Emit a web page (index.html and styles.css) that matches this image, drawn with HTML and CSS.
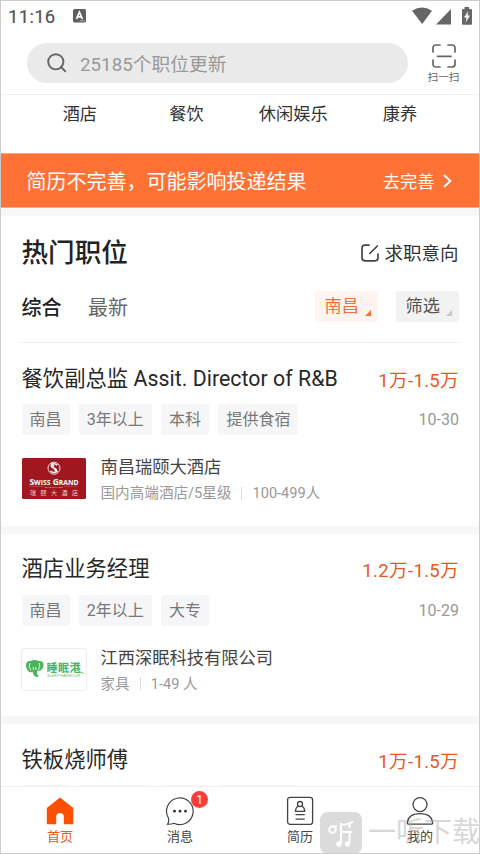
FILE: index.html
```html
<!DOCTYPE html>
<html lang="zh-CN">
<head>
<meta charset="utf-8">
<title>热门职位</title>
<link rel="stylesheet" href="styles.css">
</head>
<body>
<div class="phone">
  <header class="status">
    <span class="clock">11:16</span>
    <svg class="status-a" width="13" height="14" viewBox="0 0 13 14"><rect width="13" height="13.5" rx="1.5" fill="#606060"/><path d="M3.5 10 6.4 3.2 9.4 10M4.6 7.8h3.6" fill="none" stroke="#fff" stroke-width="1.7"/><path d="M7 11.7h4.5" stroke="#ccc" stroke-width=".8"/></svg>
    <svg class="status-icons" width="60" height="18" viewBox="0 0 60 18"><g fill="#666"><path d="M0 3.7Q10-2.7 20 3.7L10.2 17Z"/><path d="M39 2v15.500H24Z"/><path d="M52.500 0h4.500v2H59q1 0 1 1v13.700q0 1-1 1h-8q-1 0-1-1V3q0-1 1-1h1.500z"/></g><path d="M56.300 4 52 10.500h2.600L53.600 15.500 58 8.500h-2.500z" fill="#fff"/></svg>
  </header>

  <div class="search-row">
    <div class="search">
      <svg width="20" height="20" viewBox="0 0 20 20" fill="none" stroke="#666" stroke-width="1.900"><circle cx="8.800" cy="8.800" r="7.600"/><path d="m14 14 4.300 4.300" stroke-linecap="round"/></svg>
      <span>25185个职位更新</span>
    </div>
    <div class="scan">
      <svg width="24" height="24" viewBox="0 0 24 24" fill="none" stroke="#666" stroke-width="1.700" stroke-linecap="round"><path d="M1 8V4q0-3 3-3h4M16 1h4q3 0 3 3v4M23 16v4q0 3-3 3h-4M8 23H4q-3 0-3-3v-4M5.500 12.300h13.500"/></svg>
      <span>扫一扫</span>
    </div>
  </div>

  <nav class="cats"><span>酒店</span><span>餐饮</span><span>休闲娱乐</span><span>康养</span></nav>

  <div class="banner">
    <span class="banner-text">简历不完善，可能影响投递结果</span>
    <span class="banner-go">去完善</span>
    <svg width="9" height="14" viewBox="0 0 9 14" fill="none" stroke="#fff" stroke-width="2"><path d="m1 1 6.300 6L1 13"/></svg>
  </div>

  <section class="heading">
    <div class="heading-top">
      <h1>热门职位</h1>
      <svg width="18" height="18" viewBox="0 0 18 18" fill="none" stroke="#444" stroke-width="1.700" stroke-linecap="round"><path d="M8 1.200H4q-3 0-3 3v9.600q0 3 3 3h10q3 0 3-3V10M8.800 9.500 16.300 2"/></svg>
      <span class="intent">求职意向</span>
    </div>
    <div class="filters">
      <b>综合</b><span class="newest">最新</span>
      <span class="chip chip-on">南昌<i></i></span>
      <span class="chip">筛选<i></i></span>
    </div>
  </section>

  <main class="jobs">
    <article class="job">
      <div class="job-head"><h2>餐饮副总监 Assit. Director of R&amp;B</h2><span class="pay">1万-1.5万</span></div>
      <div class="tags"><span>南昌</span><span>3年以上</span><span>本科</span><span>提供食宿</span><time>10-30</time></div>
      <div class="company">
        <svg class="logo" width="66" height="43" viewBox="0 0 66 43">
          <rect x="1" y="1" width="64" height="41" rx="1.500" fill="#a0171f"/>
          <circle cx="33" cy="11.200" r="6" fill="none" stroke="#f2dcdc" stroke-width="1"/>
          <path d="M36.300 8.200Q33 5.500 30.500 8c-1.500 3.200 5.500 2.600 5 5.700-1 2.600-4 2.300-6 .3M30 6.500l3 3M33 12l3.500 3" fill="none" stroke="#fff" stroke-width="1.500"/>
          <text class="logo-en" x="8.500" y="27.500" textLength="49" lengthAdjust="spacingAndGlyphs">S<tspan font-size="6.500">WISS</tspan> G<tspan font-size="6.500">RAND</tspan></text>
          <path d="M8 29.300h15M43 29.300h14" stroke="#c66d70" stroke-width=".5"/>
          <text class="logo-city" x="33" y="31" text-anchor="middle" textLength="18">NANCHANG</text>
          <text class="logo-cn" x="9" y="38.300" textLength="48">瑞颐大酒店</text>
        </svg>
        <div class="info"><strong>南昌瑞颐大酒店</strong><p><span>国内高端酒店/5星级</span><span class="size">100-499人</span></p></div>
      </div>
    </article>

    <article class="job">
      <div class="job-head"><h2>酒店业务经理</h2><span class="pay">1.2万-1.5万</span></div>
      <div class="tags"><span>南昌</span><span>2年以上</span><span>大专</span><time>10-29</time></div>
      <div class="company">
        <svg class="logo" width="66" height="43" viewBox="0 0 66 43">
          <rect x=".5" y=".5" width="65" height="42" rx="2.500" fill="#fff" stroke="#ececec"/>
          <path d="M9.500 13Q5 12.500 5 17.500q.5 6 5 7l1.500-1q.5 3 2 4.500 2.500 2 4.500-.3-2.500-.2-2-4.200l.8-.2q5-.8 5.700-5.800.3-5-4.500-4.500-4-2-8.500 0Z" fill="#4db35c"/>
          <path d="M8.800 15q-1.500 3.500 1 7.500M18.200 15q1.500 3.500-1 7.500M12.300 19v3M14.800 19v3" fill="none" stroke="#fff" stroke-width=".8"/>
          <text class="sleep" x="25.500" y="24" textLength="34">睡眠港</text>
          <text class="sleep-en" x="26" y="29.300" textLength="33" lengthAdjust="spacingAndGlyphs">SLEEP HARBOUR</text>
          <path d="M58 24q2.500 0 4.500 1.500" fill="none" stroke="#4db35c"/>
        </svg>
        <div class="info"><strong>江西深眠科技有限公司</strong><p><span>家具</span><span class="size">1-49 人</span></p></div>
      </div>
    </article>

    <article class="job">
      <div class="job-head"><h2>铁板烧师傅</h2><span class="pay">1万-1.5万</span></div>
      <div class="tags peek"><span></span><span></span><span></span><span></span></div>
    </article>
  </main>

  <footer class="tabbar">
    <div class="tab tab-on">
      <svg width="30" height="30" viewBox="0 0 30 30"><path d="M15 1.500 28.300 12v16.300h-9.500v-7.500q0-3.800-3.800-3.800t-3.800 3.800v7.500H1.800V12Z" fill="#ff5000"/></svg><span>首页</span>
    </div>
    <div class="tab">
      <svg width="30" height="30" viewBox="0 0 30 30"><path d="M3.500 22.200A13.300 13.300 0 1 1 9 27.200q-3 1.300-6.500 1 1.700-1.600 1-6Z" fill="none" stroke="#444" stroke-width="1.200"/><g fill="#333"><circle cx="9.500" cy="15.200" r="1.400"/><circle cx="15" cy="15.200" r="1.400"/><circle cx="20.500" cy="15.200" r="1.400"/></g></svg><span>消息</span>
      <em class="badge">1</em>
    </div>
    <div class="tab">
      <svg width="30" height="30" viewBox="0 0 30 30" fill="none" stroke="#444" stroke-width="1.300"><rect x="2.600" y="1.300" width="25" height="27" rx="2.500"/><circle cx="15" cy="8" r="2.500"/><path d="M13.500 10q-3 1.500-3 5.300h9.200q0-3.800-3-5.300M10.500 18.700h9.200M10.500 23.200h9.200"/></svg><span>简历</span>
    </div>
    <div class="tab">
      <svg width="30" height="30" viewBox="0 0 30 30" fill="none" stroke="#444" stroke-width="1.300"><circle cx="15" cy="8.600" r="7"/><path d="M2.300 27.300Q3 17.700 15 17.700t12.700 9.600q0 .8-1 .8H3.300q-1 0-1-.8Z"/></svg><span>我的</span>
    </div>
  </footer>

  <div class="mark">
    <svg width="42" height="42" viewBox="0 0 42 42"><rect width="42" height="42" rx="8" fill="#b9b9b9"/><g fill="none" stroke="#fff" stroke-width="2"><circle cx="12.500" cy="17.500" r="3.300"/><path d="M12.500 14.200H17M33 9.500q-5 3.500-12 3.300M21 11v20M21 20h11.500M29.500 20v11M29.500 12v4"/></g><g fill="#fff"><circle cx="19" cy="32" r="2.700"/><circle cx="27.500" cy="32" r="2.700"/></g></svg>
    <span>一听下载</span>
  </div>
</div>
</body>
</html>
```
FILE: styles.css
```css
* { box-sizing: border-box; margin: 0; padding: 0; }
body {
  width: 480px; height: 854px; overflow: hidden; background: #fff;
  font-family: Roboto, "Noto Sans CJK SC", sans-serif; color: #333;
}
svg { display: block; flex: none; }
.phone {
  position: relative; width: 480px; height: 854px; border: 1px solid #ccc;
  display: flex; flex-direction: column; overflow: hidden; white-space: nowrap;
}
.status { height: 42px; flex: none; display: flex; align-items: flex-start; padding: 6px 7px 0 7px; }
.clock { font-size: 18.500px; line-height: 20px; color: #555; letter-spacing: .3px; width: 65px; -webkit-text-stroke: .2px #555; }
.status-a { margin-top: 2px; }
.status-icons { margin-left: auto; }

.search-row { height: 51px; flex: none; display: flex; padding: 0 19px 0 26px; justify-content: space-between; }
.search {
  width: 381px; height: 40px; border-radius: 20px; background: #eaeaea;
  display: flex; align-items: center; padding-left: 20px; gap: 13px;
  font-size: 18.700px; color: #999; letter-spacing: .05px;
}
.search span { margin-top: -2px; }
.scan { width: 33px; display: flex; flex-direction: column; align-items: center; font-size: 10.700px; line-height: 14px; color: #666; padding-top: 1px; gap: 3px; }

.cats { height: 59px; flex: none; border-top: 1px solid #f2f2f2; display: grid; grid-template-columns: repeat(4, 106.700px); padding-left: 25.500px; text-align: center; font-size: 17.200px; line-height: 38px; }

.banner { height: 55px; flex: none; background: #ff7236; color: #fff; display: flex; align-items: center; padding: 0 27px 0 25.500px; border-bottom: 1px solid #eeb18e; border-top: 1px solid #f4a77e; }
.banner-text { font-size: 20px; }
.banner-go { font-size: 17.300px; margin: 0 8.500px 0 auto; }

.heading { height: 135px; flex: none; margin: 0 20px; border-bottom: 1px solid #eee; padding-top: 24px; position: relative; }
.heading::before { content: ""; position: absolute; left: -20px; right: -20px; top: 1px; height: 7px; background: #f7f7f7; }
.heading-top { display: flex; align-items: center; height: 42px; padding: 0 .5px; }
h1 { font-size: 26.600px; font-weight: 500; color: #222; margin-right: auto; line-height: 40px; }
.intent { font-size: 18.500px; margin-left: 5px; margin-top: -2px; }
.filters { display: flex; align-items: center; height: 31px; margin: 17px 0 0 .5px; font-size: 20px; }
.filters b { font-weight: 500; color: #222; }
.newest { color: #666; margin: 0 auto 0 26.500px; }
.chip { position: relative; width: 63px; height: 31px; line-height: 31px; border-radius: 3px; background: #f2f2f2; color: #555; font-size: 17.200px; padding-left: 9.500px; margin-left: 18px; }
.chip i { position: absolute; right: 7px; bottom: 6px; border-left: 6px solid transparent; border-bottom: 6px solid #c8c8c8; }
.chip-on { background: #fff4ef; color: #f0713a; }
.chip-on i { border-bottom-color: #f0713a; }

.jobs { flex: 1; min-height: 0; overflow: hidden; }
.job { height: 190.500px; padding: 17px 20px 0 20.500px; border-bottom: 8px solid #f7f7f7; }
.job-head { display: flex; align-items: center; justify-content: space-between; height: 32px; }
h2 { font-size: 21.300px; font-weight: 400; color: #282828; letter-spacing: .04px; }
.pay { font-size: 18.600px; color: #e8591c; letter-spacing: .3px; margin: 4px 0 0; }
.tags { display: flex; align-items: center; gap: 9.300px; margin-top: 12px; height: 31px; }
.tags span { height: 31px; line-height: 31px; padding: 0 8px; border-radius: 3px; background: #f6f6f8; color: #777; font-size: 16px; }
.peek span { width: 48px; }
.peek span:nth-child(2) { width: 73px; }
.peek span:nth-child(4) { width: 80px; }
time { margin-left: auto; color: #999; font-size: 16px; }
.company { display: flex; margin: 22px 0 0 -.5px; gap: 13.500px; }
.info strong { display: block; font-weight: 400; font-size: 17.250px; line-height: 24px; margin-top: -2px; color: #444; }
.info p { display: flex; align-items: center; font-size: 14.600px; line-height: 20px; margin-top: 4px; color: #999; }
.size { margin-left: 10px; display: flex; align-items: center; }
.size::before { content: ""; width: 1px; height: 13px; background: #ddd; margin-right: 10px; }
.logo-en { font: bold 8px "Open Sans", sans-serif; fill: #fff; }
.logo-city { font: bold 2.500px "Liberation Sans", sans-serif; fill: #e9c5c6; }
.logo-cn { font: 6px "Noto Sans CJK SC", sans-serif; fill: #f0d2d2; }
.sleep { font: bold 11px "Noto Sans CJK SC", sans-serif; fill: #4db35c; }
.sleep-en { font: 4px "Liberation Sans", sans-serif; fill: #6eba78; }

.tabbar { height: 67px; flex: none; border-top: 1px solid #f1f1f1; background: #fff; display: grid; grid-template-columns: repeat(4, 120px); margin-left: -1px; }
.tab { position: relative; display: flex; flex-direction: column; align-items: center; padding-top: 9px; font-size: 13px; line-height: 18px; color: #444; gap: 3px; }
.tab span { line-height: 16px; }
.tab-on { color: #e95a1c; }
.badge { position: absolute; left: 71px; top: 4px; width: 17px; height: 17px; border-radius: 50%; background: #fa3c3c; color: #fff; font-size: 12px; font-style: normal; line-height: 18px; text-align: center; }
.mark { position: absolute; left: 319px; top: 811px; display: flex; align-items: center; gap: 6px; opacity: .5; color: #b2b2b2; font-size: 28px; line-height: 42px; }
```
